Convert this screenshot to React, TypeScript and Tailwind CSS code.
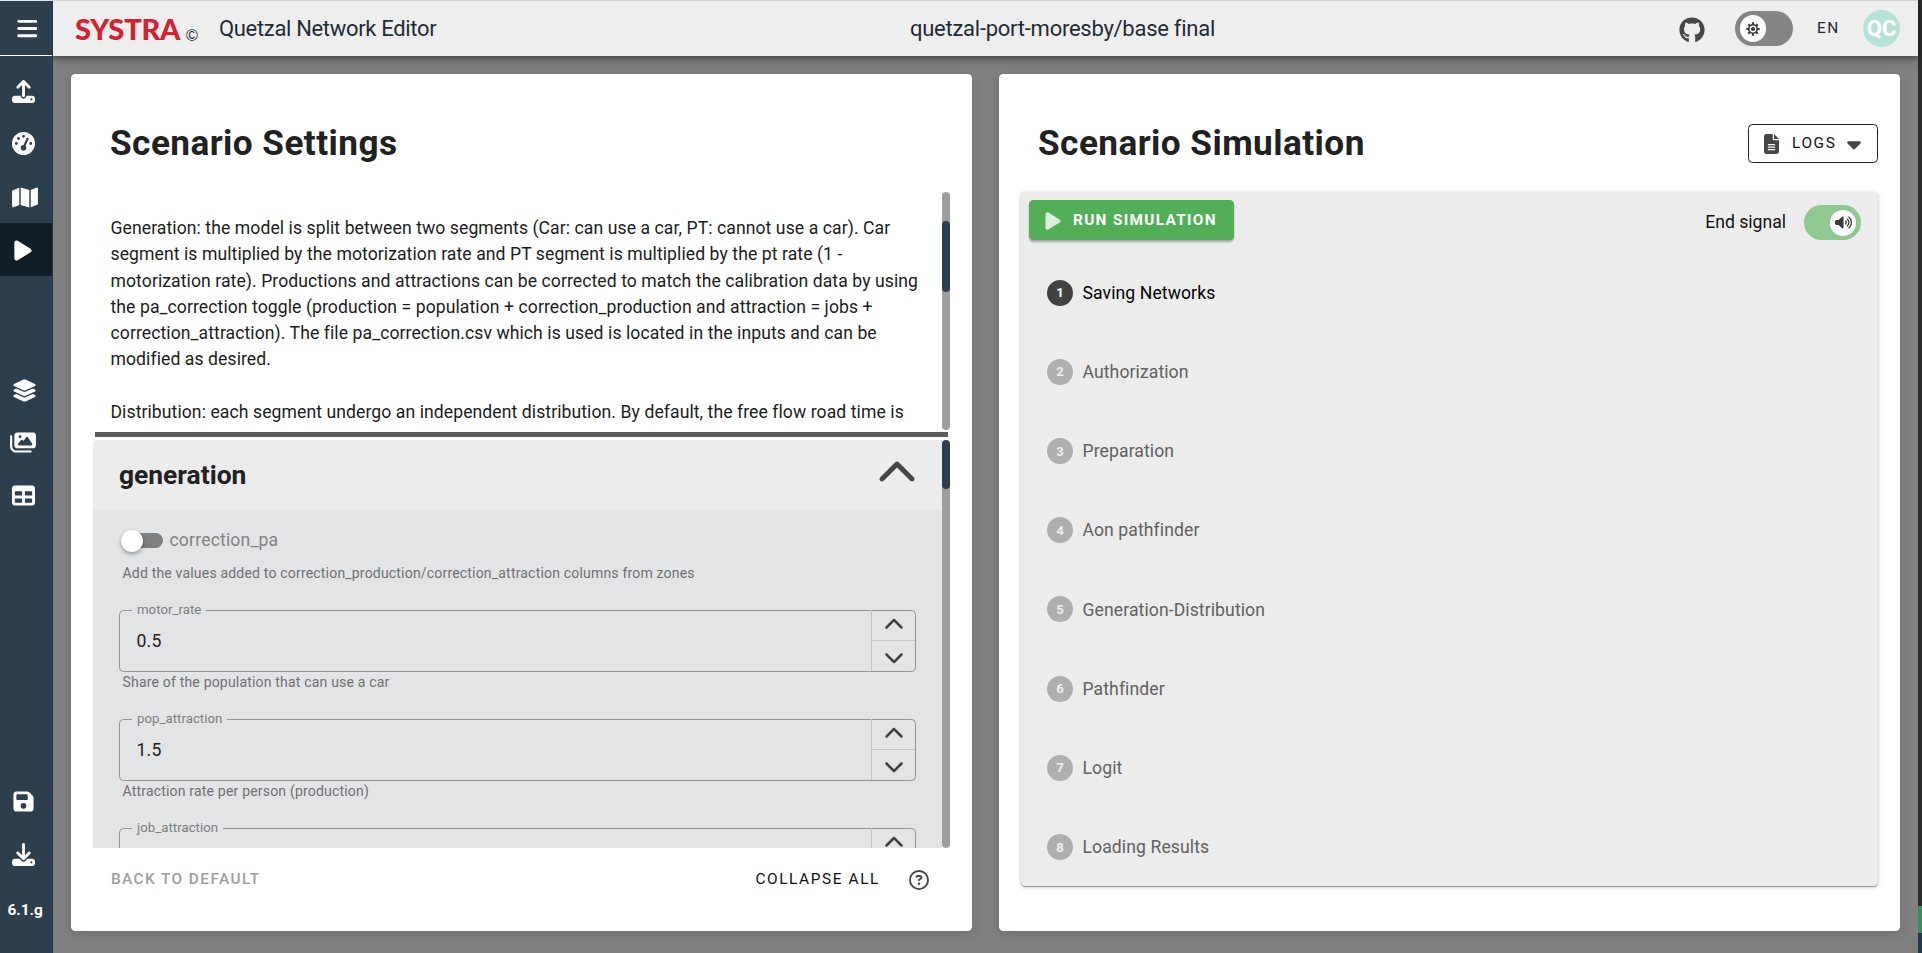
import type { ReactNode } from "react";
import {
  FaBars, FaCaretDown, FaChevronDown, FaChevronUp, FaDownload, FaFileLines, FaFloppyDisk, FaGaugeHigh,
  FaGithub, FaImages, FaLayerGroup, FaMap, FaPlay, FaRegCircleQuestion, FaTable, FaUpload, FaVolumeHigh,
} from "react-icons/fa6";

const description = [
  "Generation: the model is split between two segments (Car: can use a car, PT: cannot use a car). Car",
  "segment is multiplied by the motorization rate and PT segment is multiplied by the pt rate (1 -",
  "motorization rate). Productions and attractions can be corrected to match the calibration data by using",
  "the pa_correction toggle (production = population + correction_production and attraction = jobs +",
  "correction_attraction). The file pa_correction.csv which is used is located in the inputs and can be",
  "modified as desired.",
  "",
  "Distribution: each segment undergo an independent distribution. By default, the free flow road time is",
];

const steps = [
  "Saving Networks", "Authorization", "Preparation", "Aon pathfinder",
  "Generation-Distribution", "Pathfinder", "Logit", "Loading Results",
];

function NavItem({ children, active = false }: { children: ReactNode; active?: boolean }) {
  return (
    <button className={`flex h-[52.8px] w-[52px] shrink-0 items-center pl-3 ${active ? "bg-[#111e27]" : ""}`}>
      {children}
    </button>
  );
}

function Sidebar() {
  return (
    <nav className="z-20 flex w-[53px] shrink-0 flex-col border-r border-[#243646] bg-[#2d3e4d] text-white">
      <div className="flex h-[55px] w-[52px] shrink-0 items-center border-b border-white pl-[16.5px]">
        <FaBars className="h-[23px] w-[20.5px]" />
      </div>
      <div className="mt-[9px] flex flex-col">
        <NavItem><FaUpload className="h-[23px] w-[23px]" /></NavItem>
        <NavItem><FaGaugeHigh className="-mt-[2px] h-[23px] w-[23px]" /></NavItem>
        <NavItem><FaMap className="mt-[2px] h-[23px] w-[26px]" /></NavItem>
        <NavItem active><FaPlay className="mt-[2px] ml-[2px] h-[23px] w-[18px]" /></NavItem>
      </div>
      <div className="mt-[87.5px] flex flex-col">
        <NavItem><FaLayerGroup className="h-[23px] w-[25px]" /></NavItem>
        <NavItem><FaImages className="-ml-[2px] h-[23px] w-[26px]" /></NavItem>
        <NavItem><FaTable className="h-[23px] w-[23px]" /></NavItem>
      </div>
      <div className="mt-auto flex flex-col pb-[34px]">
        <NavItem><FaFloppyDisk className="ml-[1px] h-[23px] w-[21px]" /></NavItem>
        <NavItem><FaDownload className="h-[23px] w-[23px]" /></NavItem>
        <div className="mt-[20px] pl-[7.5px] text-[15.4px] leading-[18px] font-bold">6.1.g</div>
      </div>
    </nav>
  );
}

function SunGear() {
  return (
    <svg viewBox="0 0 24 24" className="h-[14px] w-[14px]" fill="none" stroke="#3a3a3a">
      <circle cx="12" cy="12" r="7.2" strokeWidth="2.8" />
      <circle cx="12" cy="12" r="3.6" fill="#3a3a3a" stroke="none" />
      <g strokeWidth="3.6">
        <path d="M12 0.5v4M12 19.5v4M0.5 12h4M19.5 12h4M3.9 3.9l2.8 2.8M17.3 17.3l2.8 2.8M3.9 20.1l2.8-2.8M17.3 6.7l2.8-2.8" />
      </g>
    </svg>
  );
}

function Header() {
  return (
    <header className="z-10 flex h-[55px] shrink-0 items-center bg-[#eeeeee] text-[#1f2b35] shadow-[0_2px_5px_rgba(0,0,0,0.3),0_4px_10px_rgba(0,0,0,0.22)]">
      <div className="flex w-[166px] shrink-0 items-center pl-[22px]">
        <span className="w-[110px] font-[Lato] text-[29px] leading-none font-black tracking-[-0.2px] text-[#d4202f]">SYSTRA</span>
        <span className="mt-[15px] ml-px font-['Liberation_Sans'] text-[16px] leading-none">©</span>
      </div>
      <div className="w-[691px] shrink-0 text-[22px] tracking-[-0.33px] whitespace-nowrap">Quetzal Network Editor</div>
      <div className="flex-1 text-[22px] tracking-[-0.26px] whitespace-nowrap">quetzal-port-moresby/base final</div>
      <FaGithub className="mt-[3px] h-[26px] w-[26px] text-[#464646]" />
      <div className="ml-[30px] flex h-[35px] w-[58px] items-center rounded-full bg-[#858585] pl-[5px]">
        <span className="flex h-[27px] w-[26px] items-center justify-center rounded-full bg-white"><SunGear /></span>
      </div>
      <span className="mt-px ml-[24px] w-[22px] text-[15.4px] tracking-[1.6px]">EN</span>
      <span className="mr-[18px] ml-[24px] flex h-[37px] w-[37px] items-center justify-center rounded-full bg-[#b8e2d8] text-[22px] font-bold text-white">QC</span>
    </header>
  );
}

function Scrollbar({ thumb }: { thumb: string }) {
  return (
    <div className="w-2 shrink-0 overflow-hidden rounded-full bg-[#9e9e9e]">
      <div className={`w-2 rounded-full bg-[#2d3e4d] ${thumb}`} />
    </div>
  );
}

function NumberField({ label, value, hint }: { label: string; value: string; hint: string }) {
  return (
    <div className="h-[109px] shrink-0">
      <fieldset className="-mt-[7px] flex h-[69px] w-[797px] rounded-[4.4px] border border-[#929496]">
        <legend className="ml-[12px] h-[14px] px-[5px] text-[13.2px] leading-[13px] tracking-[0.05px] text-[#7b7d7f]">{label}</legend>
        <div className="-mt-[7px] flex h-[61px] w-full">
          <div className="flex-1 pt-[18px] pl-[16.5px] text-[17.6px] leading-[26px] tracking-[0.2px] text-[#212121]">{value}</div>
          <div className="flex w-[44px] flex-col border-l border-[#c3c5c7] text-[#3f4041]">
            <div className="flex h-[31px] items-center justify-center border-b border-[#c3c5c7] pb-px"><FaChevronUp className="h-5 w-5" /></div>
            <div className="flex flex-1 items-center justify-center pt-px"><FaChevronDown className="h-5 w-5" /></div>
          </div>
        </div>
      </fieldset>
      <div className="mt-px pl-[3.5px] text-[14px] leading-[18px] tracking-[0.19px] text-[#6e7072]">{hint}</div>
    </div>
  );
}

function SettingsCard() {
  return (
    <section className="flex w-[901px] flex-col rounded-[4.4px] bg-white pl-[22px] shadow-[0_3px_12px_rgba(0,0,0,0.15)]">
      <h1 className="mt-[43px] h-[75px] pl-[17px] text-[35.2px] leading-[53px] font-bold tracking-[0.44px] text-[#212121]">Scenario Settings</h1>
      <div className="flex h-[238px] w-[857px]">
        <div className="flex-1 overflow-hidden pt-[23px] pl-[17.5px] text-[17.6px] leading-[26.4px] tracking-[0.075px] whitespace-nowrap text-[#1c1c1c]">
          {description.map((line, i) => <p key={i} className="h-[26.3px]">{line}</p>)}
        </div>
        <Scrollbar thumb="mt-[29px] h-[71px]" />
      </div>
      <div className="mt-[2px] ml-[2px] h-[5px] w-[853px] bg-[#5d5d5d]" />
      <div className="mt-[3px] flex h-[408px] w-[857px]">
        <div className="flex flex-1 flex-col overflow-hidden rounded-tl-[4.4px] bg-[#e2e4e6]">
          <div className="flex h-[70px] shrink-0 items-center justify-between bg-[#ececec] pr-[25px] pl-[26px] text-[#212121]">
            <h2 className="text-[26.4px] leading-none font-bold">generation</h2>
            <FaChevronUp className="-mt-[3px] h-10 w-10 text-[#464646]" />
          </div>
          <div className="flex flex-col pl-[26px]">
            <div className="mt-[17px] flex h-[26px] items-center">
              <span className="relative ml-[2px] flex h-[15px] w-[42px] rounded-full bg-[#7f7f7f]">
                <span className="absolute -top-[3px] left-0 h-[22px] w-[22px] rounded-full bg-white shadow-[0_2px_4px_rgba(0,0,0,0.35)]" />
              </span>
              <span className="mt-px ml-[6.5px] text-[17.6px] tracking-[0.16px] text-[#808284]">correction_pa</span>
            </div>
            <div className="mt-[11px] mb-[28px] pl-[3.5px] text-[14px] leading-[18px] tracking-[0.19px] text-[#6e7072]">
              Add the values added to correction_production/correction_attraction columns from zones
            </div>
            <NumberField label="motor_rate" value="0.5" hint="Share of the population that can use a car" />
            <NumberField label="pop_attraction" value="1.5" hint="Attraction rate per person (production)" />
            <NumberField label="job_attraction" value="" hint="" />
          </div>
        </div>
        <Scrollbar thumb="h-[49px]" />
      </div>
      <div className="mt-px flex h-[62px] items-center pr-[43px] pl-[18px] text-[15.4px] tracking-[1.4px]">
        <span className="flex-1 font-medium text-[#9e9e9e]">BACK TO DEFAULT</span>
        <span className="tracking-[1.6px] text-[#111111]">COLLAPSE ALL</span>
        <FaRegCircleQuestion className="ml-[29px] h-[20px] w-[20px] text-[#464646]" />
      </div>
    </section>
  );
}

function SimulationCard() {
  return (
    <section className="flex w-[901px] flex-col rounded-[4.4px] bg-white pl-[22px] shadow-[0_3px_12px_rgba(0,0,0,0.15)]">
      <div className="flex h-[118px] w-[857px] justify-between">
        <h1 className="mt-[43px] pl-[17px] text-[35.2px] leading-[53px] font-bold tracking-[0.44px] text-[#212121]">Scenario Simulation</h1>
        <button className="mt-[50px] flex h-[39px] w-[130px] items-center rounded-[4.4px] border border-[#212121] pl-[15px] text-[15.4px] tracking-[1.6px] text-[#111111]">
          <FaFileLines className="h-5 w-[15px] text-[#464646]" />
          <span className="mt-px ml-[13px] w-[43px]">LOGS</span>
          <FaCaretDown className="ml-[12px] h-[22px] w-[14px] text-[#464646]" />
        </button>
      </div>
      <div className="flex h-[694px] w-[857px] flex-col rounded-[4.4px] bg-[#ececec] shadow-[0_1px_1px_rgba(0,0,0,0.35),0_1px_5px_rgba(0,0,0,0.2)]">
        <div className="flex justify-between pt-2 pr-[17px] pl-2">
          <button className="flex h-10 w-[205px] items-center rounded-[4.4px] bg-[#52af57] pl-4 text-[15.4px] font-bold tracking-[1.3px] text-white shadow-[0_2px_2px_rgba(0,0,0,0.3)]">
            <FaPlay className="mt-px h-5 w-4 opacity-80" />
            <span className="mt-[2px] ml-3 whitespace-nowrap">RUN SIMULATION</span>
          </button>
          <div className="mt-[5px] flex h-[35px] items-center">
            <span className="text-[17.6px] text-[#111111]">End signal</span>
            <span className="ml-[18px] flex h-[35px] w-[57px] items-center justify-end rounded-full bg-[#8fc891] pr-[5px]">
              <span className="flex h-[26px] w-[26px] items-center justify-center rounded-full bg-white text-[#3a3a3a]">
                <FaVolumeHigh className="h-[15px] w-[17px]" />
              </span>
            </span>
          </div>
        </div>
        <ol className="mt-[13px] flex flex-col pl-[26px]">
          {steps.map((step, i) => (
            <li key={step} className="flex h-[79.2px] items-center">
              <span className={`flex h-[26px] w-[26px] items-center justify-center rounded-full pt-px text-[13.2px] font-bold ${i === 0 ? "bg-[#424242] text-white" : "bg-[#afafaf] text-[#eeeeee]"}`}>{i + 1}</span>
              <span className={`mt-px ml-[9.5px] text-[17.6px] tracking-[0.09px] ${i === 0 ? "text-black" : "text-[#616161]"}`}>{step}</span>
            </li>
          ))}
        </ol>
      </div>
    </section>
  );
}

export default function App() {
  return (
    <div className="flex h-[953px] w-[1922px] overflow-hidden bg-[#808080] font-[Roboto,sans-serif]">
      <div className="flex w-[1918px] flex-col">
        <div className="h-px shrink-0 bg-[#e2e5e0]" />
        <div className="flex min-h-0 flex-1">
          <Sidebar />
          <div className="flex flex-1 flex-col">
            <Header />
            <main className="flex flex-1 gap-[27px] pt-[18px] pb-[22px] pl-[18px]">
              <SettingsCard />
              <SimulationCard />
            </main>
          </div>
        </div>
      </div>
      <div className="flex w-1 flex-col bg-[#2a2a2a]">
        <div className="mt-auto h-[27px] bg-[#3f8a62]" />
        <div className="h-5 bg-[#223747]" />
      </div>
    </div>
  );
}
